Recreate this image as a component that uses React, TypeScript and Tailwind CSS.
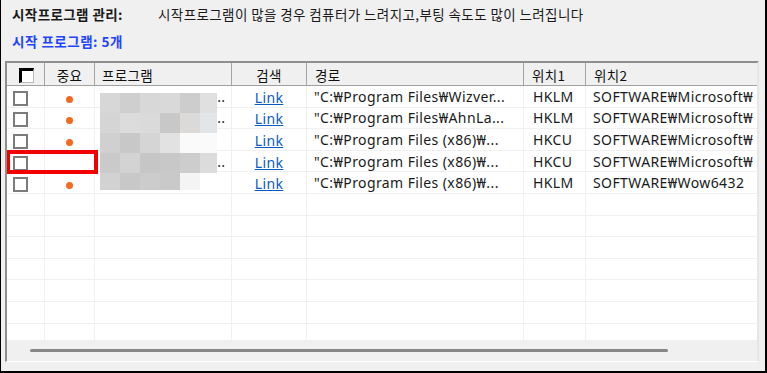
import React from 'react'

const rows = [
  { dot: true, ell: true, path: '"C:₩Program Files₩Wizver...', loc1: 'HKLM', loc2: 'SOFTWARE₩Microsoft₩' },
  { dot: true, ell: true, path: '"C:₩Program Files₩AhnLa...', loc1: 'HKLM', loc2: 'SOFTWARE₩Microsoft₩' },
  { dot: true, ell: false, path: '"C:₩Program Files (x86)₩...', loc1: 'HKCU', loc2: 'SOFTWARE₩Microsoft₩' },
  { dot: false, ell: true, path: '"C:₩Program Files (x86)₩...', loc1: 'HKCU', loc2: 'SOFTWARE₩Microsoft₩' },
  { dot: true, ell: false, path: '"C:₩Program Files (x86)₩...', loc1: 'HKLM', loc2: 'SOFTWARE₩Wow6432' },
]

// blurred program names
const mosaic = [
  ['#d7d7d7', '#cfcfcf', '#d8d8d8', '#d9d9d9', '#cdcdcd', '#e0e0e0'],
  ['#d5d5d5', '#dcdcdc', '#dadada', '#c8c8c8', '#dcdad9', '#e2e6e8'],
  ['#d0d0d0', '#c8c8c8', '#d5d5d5', '#e2e2e2', '#fafafa', '#fafafa'],
  ['#cacaca', '#d3d3d3', '#c6c6c6', '#c8c8c8', '#cdcdcd', '#dcdcdc'],
  ['#d2d2d2', '#c8c8c8', '#cccccc', '#c9c9c9', '#f4f4f4', '#ffffff'],
]

const cell = 'h-full shrink-0 border-r border-[#f0f0f0] flex items-center'

function Row({ r }: { r?: (typeof rows)[number] }) {
  return (
    <div className="flex h-[21.6px] shrink-0 border-b border-[#f0f0f0] text-[14px] tracking-[0.4px] text-[#1a1a1a] whitespace-nowrap">
      <div className={`${cell} w-[38px] pl-[6px]`}>
        {r && <div className="w-[15px] h-[15px] border-2 border-[#7c7c7c] bg-white translate-y-[2px]" />}
      </div>
      <div className={`${cell} w-[50px] justify-center`}>
        {r?.dot && <div className="w-[7px] h-[7px] rounded-full bg-[#f26a1f] translate-y-[3px]" />}
      </div>
      <div className={`${cell} w-[137px] pl-[118px]`}>{r?.ell ? '...' : ''}</div>
      <div className={`${cell} w-[75px] justify-center`}>
        {r && <span className="text-[#0a5cc2] underline translate-y-[1px]">Link</span>}
      </div>
      <div className={`${cell} w-[217px] pl-[7px] overflow-hidden`}>{r?.path}</div>
      <div className={`${cell} w-[62px] pl-[9px]`}>{r?.loc1}</div>
      <div className={`${cell} w-[171px] pl-[7px] overflow-hidden border-r-0`}>{r?.loc2}</div>
    </div>
  )
}

export default function App() {
  const korean = { fontFamily: '"Noto Sans CJK KR", "Noto Sans", sans-serif' }
  return (
    <div
      className="w-[767px] h-[373px] bg-[#f0f0f0] border-l border-r-2 border-b-2 border-black flex flex-col overflow-hidden"
      style={{ fontFamily: '"Noto Sans", "Noto Sans CJK KR", sans-serif' }}
    >
      <div className="flex pl-[11px] pt-[5px] leading-[18px] text-[13.5px] tracking-[0.4px] text-[#1a1a1a]" style={korean}>
        <div className="w-[146px] font-bold">시작프로그램 관리:</div>
        <div>시작프로그램이 많을 경우 컴퓨터가 느려지고,부팅 속도도 많이 느려집니다</div>
      </div>
      <div className="pl-[11px] mt-[9px] leading-[18px] text-[13.5px] tracking-[0.5px] font-bold text-[#1f45ff]" style={korean}>
        시작 프로그램: 5개
      </div>

      <div className="ml-[4px] mt-[11px] w-[754px] h-[301px] border-t-2 border-l-2 border-[#8e8e8e] border-r-2 border-r-[#e6e6e6] border-b border-b-white flex flex-col">
        {/* header */}
        <div className="flex h-[23px] shrink-0 bg-[#f0f0f0] border-b border-[#a0a0a0] text-[13.5px] tracking-[0.3px] text-[#111]" style={korean}>
          <div className="w-[38px] shrink-0 border-r border-[#a5a5a5] flex items-center justify-center">
            <div className="w-[15px] h-[15px] bg-white border-t-[3px] border-l-[3px] border-black border-r border-b border-r-[#bbb] border-b-[#bbb] translate-x-[1px] translate-y-[1px]" />
          </div>
          <div className="w-[50px] shrink-0 border-r border-[#a5a5a5] flex items-center justify-center pt-[2px]">중요</div>
          <div className="w-[137px] shrink-0 border-r border-[#a5a5a5] flex items-center pl-[7px] pt-[2px]">프로그램</div>
          <div className="w-[75px] shrink-0 border-r border-[#a5a5a5] flex items-center justify-center pt-[2px]">검색</div>
          <div className="w-[217px] shrink-0 border-r border-[#a5a5a5] flex items-center pl-[8px] pt-[2px]">경로</div>
          <div className="w-[62px] shrink-0 border-r border-[#a5a5a5] flex items-center pl-[8px] pt-[2px]">위치1</div>
          <div className="w-[171px] shrink-0 flex items-center pl-[8px] pt-[2px]">위치2</div>
        </div>

        {/* body */}
        <div className="relative h-[254px] shrink-0 bg-white overflow-hidden flex flex-col">
          {rows.map((r, i) => (
            <Row key={i} r={r} />
          ))}
          {Array.from({ length: 7 }).map((_, i) => (
            <Row key={'e' + i} />
          ))}

          <div className="absolute left-[93px] top-[7px] flex flex-col">
            {mosaic.map((line, i) => (
              <div key={i} className={`flex ${i === 4 ? 'h-[17px]' : 'h-[20px]'}`}>
                {line.map((c, j) => (
                  <div key={j} className={j === 5 ? 'w-[17px] h-full' : 'w-[20px] h-full'} style={{ background: c }} />
                ))}
              </div>
            ))}
          </div>

          <div className="absolute left-[-1px] top-[64px] w-[92px] h-[24px] border-4 border-[#f20000]" />
        </div>

        {/* horizontal scrollbar */}
        <div className="h-[21px] shrink-0 bg-[#f0f0f0] flex items-center pl-[23px]">
          <div className="w-[638px] h-[3px] rounded-full bg-[#868686]" />
        </div>
      </div>
    </div>
  )
}
